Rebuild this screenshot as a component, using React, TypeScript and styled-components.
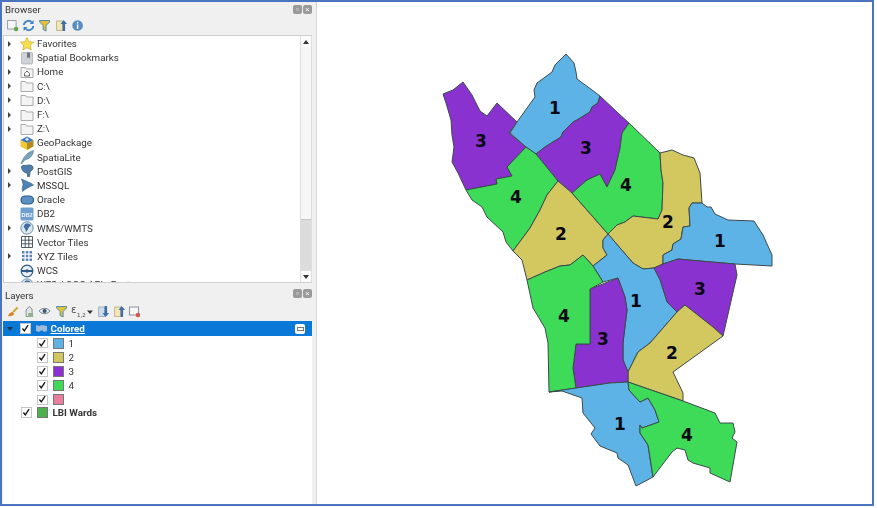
import * as React from 'react';
import styled, { createGlobalStyle } from 'styled-components';

const GlobalStyle = createGlobalStyle`
    html, body {
        margin: 0;
        background: #fff;
    }
`;

const Frame = styled.div`
    box-sizing: border-box;
    width: 874px;
    height: 506px;
    border: 2px solid #4a74bd;
    display: flex;
    font-family: Roboto, "Liberation Sans", sans-serif;
    font-size: 9.8px;
    color: #333;
`;

const Sidebar = styled.div`
    box-sizing: border-box;
    width: 315px;
    padding-left: 1px;
    background: #f0f0f0;
    border-right: 1px solid #d4d4d4;
    display: flex;
    flex-direction: column;
    filter: blur(0.3px);
`;

const DockHeader = styled.div<{ $height: number }>`
    height: ${props => props.$height}px;
    padding-right: 4px;
    display: flex;
    align-items: center;
    justify-content: space-between;
`;

const DockTitle = styled.span<{ $offset?: number }>`
    padding-left: 2px;
    margin-top: ${props => props.$offset || 0}px;
    font-size: 9.8px;
`;

const DockButtons = styled.div`
    display: flex;
    gap: 1px;
`;

const DockButton = styled.div`
    width: 9px;
    height: 9px;
    border-radius: 2px;
    background: #9a9a9a;
    color: #f2f2f2;
    font-size: 8px;
    line-height: 9px;
    text-align: center;
`;

const Toolbar = styled.div<{ $height: number; $bottom?: number }>`
    box-sizing: border-box;
    height: ${props => props.$height}px;
    padding-left: 2px;
    padding-bottom: ${props => props.$bottom || 0}px;
    display: flex;
    align-items: center;
`;

const ToolIcon = styled.svg<{ $width?: number }>`
    width: ${props => props.$width || 16.2}px;
    height: 13px;
    flex: none;
`;

const BrowserTree = styled.div`
    box-sizing: border-box;
    width: 309px;
    height: 248px;
    flex: none;
    background: #fff;
    border: 1px solid #d0d0d0;
    border-right: none;
    display: flex;
    overflow: hidden;
`;

const TreeRows = styled.div`
    flex: 1;
    padding-top: 0.5px;
    overflow: hidden;
`;

const Row = styled.div`
    height: 14.2px;
    display: flex;
    align-items: center;
    white-space: nowrap;
`;

const ArrowSlot = styled.div`
    box-sizing: border-box;
    width: 15px;
    flex: none;
    display: flex;
    padding-left: 4px;
`;

const RowArrow = styled.div`
    width: 0;
    height: 0;
    border-top: 3px solid transparent;
    border-bottom: 3px solid transparent;
    border-left: 3.5px solid #444;
`;

const RowIcon = styled.svg`
    width: 14px;
    height: 14px;
    margin-left: 1px;
    margin-right: 3px;
    flex: none;
`;

const Scrollbar = styled.div`
    width: 12px;
    flex: none;
    background: #f6f6f6;
    border-left: 1px solid #dedede;
    border-right: 1px solid #dedede;
    box-sizing: border-box;
    display: flex;
    flex-direction: column;
    justify-content: space-between;
`;

const ScrollButton = styled.div`
    height: 11px;
    background: #fbfbfb;
    display: flex;
    align-items: center;
    justify-content: center;
`;

const ScrollArrow = styled.div<{ $up?: boolean }>`
    width: 0;
    height: 0;
    border-left: 3.5px solid transparent;
    border-right: 3.5px solid transparent;
    ${props => props.$up ? 'border-bottom: 4px solid #333;' : 'border-top: 4px solid #333;'}
`;

const ScrollThumb = styled.div`
    height: 52px;
    margin-top: auto;
    background: #dcdcdc;
    border-top: 1px solid #c8c8c8;
    box-sizing: border-box;
`;

const LayerTree = styled.div`
    flex: 1;
    width: 309px;
    background: #fff;
`;

const LayerRow = styled.div<{ $selected?: boolean; $indent: number }>`
    height: 14.2px;
    padding-left: ${props => props.$indent}px;
    display: flex;
    align-items: center;
    background: ${props => props.$selected ? '#0a78d7' : 'transparent'};
    color: ${props => props.$selected ? '#fff' : '#333'};
`;

const SelectedRow = styled(LayerRow)`
    height: 15px;
`;

const RootLayerRow = styled(LayerRow)`
    margin-top: -1.5px;
`;

const LayerArrow = styled.div`
    width: 0;
    height: 0;
    margin: 0 7px 0 4px;
    border-left: 3.5px solid transparent;
    border-right: 3.5px solid transparent;
    border-top: 4px solid #20364e;
`;

const Checkbox = styled.div`
    box-sizing: border-box;
    width: 10.5px;
    height: 10.5px;
    flex: none;
    background: #fff;
    border: 1px solid #c6c6c6;
    display: flex;
    align-items: center;
    justify-content: center;
`;

const Swatch = styled.div<{ $color: string }>`
    box-sizing: border-box;
    width: 11px;
    height: 11px;
    flex: none;
    margin-left: 5px;
    margin-right: 5px;
    background: ${props => props.$color};
    border: 1px solid #777;
`;

const LayerName = styled.span<{ $bold?: boolean; $underline?: boolean }>`
    font-weight: ${props => props.$bold ? 700 : 400};
    text-decoration: ${props => props.$underline ? 'underline' : 'none'};
`;

const LayerIcon = styled.svg`
    width: 13px;
    height: 11px;
    flex: none;
    margin-left: 4px;
    margin-right: 3px;
`;

const IndicatorBox = styled.div`
    margin-left: auto;
    margin-right: 7px;
    width: 10px;
    height: 10px;
    border-radius: 2px;
    background: #fff;
    display: flex;
    align-items: center;
    justify-content: center;
`;

const IndicatorBar = styled.div`
    width: 7px;
    height: 4px;
    border: 1px solid #777;
    box-sizing: border-box;
`;

const MapPane = styled.div`
    flex: 1;
    background: #fff;
    min-width: 0;
`;

const MapSvg = styled.svg`
    display: block;
    width: 100%;
    height: 100%;
`;

const Ward = styled.polygon`
    stroke: #3b4a4c;
    stroke-width: 1;
    stroke-linejoin: round;
`;

const WardLabel = styled.text`
    font-family: "DejaVu Sans", sans-serif;
    font-weight: 700;
    font-size: 17px;
    fill: #0a0a14;
    text-anchor: middle;
    dominant-baseline: central;
`;

const BLUE = '#5eb3e6';
const YELLOW = '#d3c860';
const PURPLE = '#8a32d0';
const GREEN = '#3ddb58';

const wards: { color: string; points: string }[] = [
    { color: PURPLE, points: '443,94 453,90 463,82 472,95 480,111 487,116 497,103 517,122 509,133 526,147 507,167 512,176 496,179 497,184 466,190 458,173 452,162 454,147 452,135 451,120 446,103' },
    { color: BLUE, points: '510,133 517,122 535,97 534,90 537,83 552,72 555,65 566,54 574,63 576,72 577,79 588,87 600,96 598,103 592,107 590,112 577,120 573,122 563,132 561,137 545,147 536,154 526,147' },
    { color: PURPLE, points: '536,154 545,147 561,137 563,132 573,122 577,120 590,112 592,107 598,103 600,96 617,112 629,123 622,133 620,148 615,170 607,187 600,174 587,180 572,193 558,181' },
    { color: GREEN, points: '526,147 507,167 512,176 496,179 497,184 466,190 472,200 482,207 487,217 503,232 506,242 513,251 530,228 540,210 547,195 558,181 536,154' },
    { color: YELLOW, points: '558,181 572,193 608,234 603,240 603,248 607,255 593,266 583,255 570,265 560,266 545,272 527,280 522,260 513,251 530,228 540,210 547,195' },
    { color: GREEN, points: '572,193 587,180 600,174 607,187 615,170 620,148 622,133 629,123 660,153 661,170 663,183 662,210 658,219 633,216 625,222 617,225 608,234' },
    { color: YELLOW, points: '660,153 672,150 683,155 694,158 700,173 702,203 692,203 689,208 690,226 683,227 681,239 673,244 672,250 663,255 663,264 654,268 643,269 633,263 620,248 608,234 617,225 625,222 633,216 658,219 662,210 663,183 661,170' },
    { color: BLUE, points: '702,203 707,207 711,207 715,214 728,220 754,221 763,235 772,255 772,266 735,264 700,261 678,259 663,264 663,255 672,250 673,244 681,239 683,227 690,226 689,208 692,203' },
    { color: PURPLE, points: '654,268 663,264 678,259 700,261 735,264 737,275 723,336 713,327 685,305 677,312 667,302 660,280' },
    { color: BLUE, points: '608,234 620,248 633,263 643,269 654,268 660,280 667,302 677,312 650,343 638,352 628,372 623,360 623,343 627,310 625,297 618,278 603,282 593,266 607,255 603,248 603,240' },
    { color: YELLOW, points: '685,305 713,327 723,336 673,372 683,393 683,401 628,382 628,372 638,352 650,343 677,312' },
    { color: PURPLE, points: '618,278 625,297 627,310 623,343 623,360 628,372 628,382 610,383 576,388 573,368 576,344 590,344 590,289' },
    { color: GREEN, points: '583,255 593,266 603,282 590,289 590,344 576,344 573,368 576,388 549,392 548,343 545,328 533,308 527,280 545,272 560,266 570,265' },
    { color: BLUE, points: '549,392 576,388 610,383 628,382 629,390 640,402 648,398 655,410 659,422 642,428 640,425 640,433 648,445 653,477 636,486 628,465 618,458 617,453 600,446 591,434 595,428 583,413 582,398 562,391' },
    { color: GREEN, points: '628,382 683,401 715,413 720,423 733,423 735,432 732,438 737,442 730,482 710,473 710,468 693,463 688,460 685,450 677,448 672,452 653,477 648,445 640,433 640,425 642,428 659,422 655,410 648,398 640,402 629,390' },
];

const wardLabels: { text: string; x: number; y: number }[] = [
    { text: '1', x: 555, y: 108 },
    { text: '3', x: 481, y: 141 },
    { text: '3', x: 586, y: 148 },
    { text: '4', x: 516, y: 197 },
    { text: '4', x: 626, y: 185 },
    { text: '2', x: 561, y: 234 },
    { text: '2', x: 668, y: 222 },
    { text: '1', x: 720, y: 241 },
    { text: '1', x: 636, y: 301 },
    { text: '3', x: 700, y: 289 },
    { text: '4', x: 564, y: 316 },
    { text: '3', x: 603, y: 339 },
    { text: '2', x: 672, y: 353 },
    { text: '1', x: 620, y: 424 },
    { text: '4', x: 687, y: 435 },
];

const folder = <path d="M1 2.500h4.500l1 1.500H13v8.500H1z" fill="#f4f4f4" stroke="#a2a2a2" strokeWidth="0.9" />;

const treeIcons: Record<string, React.ReactNode> = {
    star: <path d="M7 .4l2 4.300 4.700.5-3.500 3.100 1 4.700-4.200-2.400-4.200 2.400 1-4.700L.3 5.200 5 4.700z" fill="#f7e04b" stroke="#c9a82c" strokeWidth="0.7" />,
    bookmark: (
        <>
            <rect x="1.500" y="1.500" width="11" height="11.500" rx="1" fill="#cfd2d6" stroke="#a5a8ac" strokeWidth="0.7" />
            <path d="M7 1.500h3v6L8.500 6.300 7 7.500z" fill="#73767a" />
        </>
    ),
    home: (
        <>
            {folder}
            <path d="M4.500 8.500L7 6l2.500 2.500v2.500h-5z" fill="#fff" stroke="#555" strokeWidth="0.9" />
        </>
    ),
    folder,
    geopackage: (
        <>
            <path d="M7 7l6.500-3v6.500L7 14z" fill="#b78a1c" />
            <path d="M7 7L.5 4v6.500L7 14z" fill="#f0c935" />
            <path d="M7 .5L13.500 4 7 7 .5 4z" fill="#3f78b5" />
            <path d="M5 3.500L7 1.500l2 2-2 1.500z" fill="#dfe8ef" />
        </>
    ),
    spatialite: <path d="M1 13.500C3 8 6.500 2.500 13.500.5c-.5 4.500-3 8-7.500 9C4 10.500 3 11.500 2 13.700z" fill="#7da4bd" stroke="#4d7690" strokeWidth="0.6" />,
    postgis: <path d="M1.500 3c0-1.500 2-2 4.500-1.500 2-1 6.500-.8 7 1.500.4 2-1.500 4-3 5l-.5 4.500H7.500V9C5 9.500 1.500 6.500 1.500 3z" fill="#4f7ca8" stroke="#2f5578" strokeWidth="0.7" />,
    mssql: <path d="M1.500 1c3 1.500 9 3.500 12 6-3 1.500-8 3.500-11 6.500-.8-3.500.5-5.500.5-7S2 3 1.500 1z" fill="#4f81b5" stroke="#2f5b8a" strokeWidth="0.6" />,
    oracle: <rect x="1" y="3" width="12.500" height="8" rx="3.900" fill="#5c8fc4" stroke="#2f5f93" strokeWidth="1.200" />,
    db2: (
        <>
            <rect x="0.500" y="0.500" width="13" height="13" rx="1.500" fill="#6e9fd0" />
            <text x="7" y="9.500" fontSize="5.500" fontWeight="700" fill="#f0f6fb" textAnchor="middle" fontFamily="Liberation Sans">DB2</text>
        </>
    ),
    globe: (
        <>
            <circle cx="7" cy="7" r="6.200" fill="#dbe6f0" stroke="#6d8fb0" strokeWidth="1" />
            <path d="M5 3c2-1 5-.5 6 1.500L9 6 7.500 9 6 11 5 7.500 3.500 6z" fill="#3f6f9e" />
        </>
    ),
    grid: <path d="M1.500 1.500h11v11h-11zM5.200 1.500v11M8.800 1.500v11M1.500 5.200h11M1.500 8.800h11" fill="#fff" stroke="#3d4a55" strokeWidth="0.9" />,
    dots: <path d="M2 2h2.500v2.500H2zM5.800 2h2.500v2.500H5.800zM9.500 2H12v2.500H9.500zM2 5.800h2.500v2.500H2zM5.800 5.800h2.500v2.500H5.800zM9.500 5.800H12v2.500H9.500zM2 9.500h2.500V12H2zM5.800 9.500h2.500V12H5.800zM9.500 9.500H12V12H9.500z" fill="#5b84b5" />,
    wcs: (
        <>
            <circle cx="7" cy="7" r="5.800" fill="#e9eff5" stroke="#2f5b8a" strokeWidth="1.300" />
            <path d="M1.500 7h11" stroke="#2f5b8a" strokeWidth="2" />
            <circle cx="7" cy="7" r="1.800" fill="#2f5b8a" />
        </>
    ),
};

const browserItems: { label: string; icon: string; expandable: boolean }[] = [
    { label: 'Favorites', icon: 'star', expandable: true },
    { label: 'Spatial Bookmarks', icon: 'bookmark', expandable: true },
    { label: 'Home', icon: 'home', expandable: true },
    { label: 'C:\\', icon: 'folder', expandable: true },
    { label: 'D:\\', icon: 'folder', expandable: true },
    { label: 'F:\\', icon: 'folder', expandable: true },
    { label: 'Z:\\', icon: 'folder', expandable: true },
    { label: 'GeoPackage', icon: 'geopackage', expandable: false },
    { label: 'SpatiaLite', icon: 'spatialite', expandable: false },
    { label: 'PostGIS', icon: 'postgis', expandable: true },
    { label: 'MSSQL', icon: 'mssql', expandable: true },
    { label: 'Oracle', icon: 'oracle', expandable: false },
    { label: 'DB2', icon: 'db2', expandable: false },
    { label: 'WMS/WMTS', icon: 'globe', expandable: true },
    { label: 'Vector Tiles', icon: 'grid', expandable: false },
    { label: 'XYZ Tiles', icon: 'dots', expandable: true },
    { label: 'WCS', icon: 'wcs', expandable: false },
    { label: 'WFS / OGC API - Features', icon: 'globe', expandable: true },
];

const funnel = <path d="M1.500 1.500h10v1.500L8 6.500V12l-3-1.500v-4L1.500 3z" fill="#e3c23a" stroke="#3d87b8" strokeWidth="0.9" />;
const upDoc = (
    <>
        <path d="M1.500 2h6v9.500h-6z" fill="#f3e7b8" stroke="#b9a873" strokeWidth="0.8" />
        <path d="M8.500 1L12 5H10v7H7.500V5H5.500z" fill="#3f6fa8" />
    </>
);

const browserTools: React.ReactNode[] = [
    <>
        <rect x="1.500" y="1.500" width="8.500" height="8.500" fill="#f6f6f6" stroke="#8c9aa5" strokeWidth="0.9" />
        <circle cx="10" cy="10" r="2.300" fill="#67a54a" />
    </>,
    <>
        <path d="M1.800 6a4.500 4.500 0 0 1 8-2.500M11.200 7a4.500 4.500 0 0 1-8 2.500" fill="none" stroke="#3f86c4" strokeWidth="1.800" />
        <path d="M11.500 1v4h-4zM1.500 12V8h4z" fill="#3f86c4" />
    </>,
    funnel,
    upDoc,
    <>
        <circle cx="6.500" cy="6.500" r="5.300" fill="#5a8fc2" />
        <path d="M5.800 5.500h1.400V10H5.800zM5.800 3h1.400v1.400H5.800z" fill="#fff" />
    </>,
];

const layerTools: { node: React.ReactNode; width?: number }[] = [
    { node: <><path d="M2 11c1-3 3-4 4.500-4l1.500 1.500C8 10 5 12 2 11z" fill="#d9822b" /><path d="M7 7l4.500-4.500" stroke="#c9a82c" strokeWidth="1.800" /></> },
    { node: <><path d="M4 11.500V5l3-3.500L10 4v7.500z" fill="#e4e6e6" stroke="#79848a" strokeWidth="0.9" /><path d="M6 8h5v4H6z" fill="#8fb28f" /></> },
    { node: <><path d="M1 6c3-3.500 8-3.500 11 0-3 3.500-8 3.500-11 0z" fill="#e8edf0" stroke="#66757f" strokeWidth="0.9" /><circle cx="6.500" cy="6" r="2" fill="#33556f" /></> },
    { node: funnel },
    { node: <><text x="1" y="8" fontSize="10" fill="#444" fontFamily="DejaVu Sans">ε</text><text x="7" y="11.500" fontSize="5.500" fill="#444" fontFamily="DejaVu Sans">1,2</text><path d="M17 5.500h6l-3 3.500z" fill="#333" /></>, width: 26 },
    { node: <><path d="M1.500 2h6v9.500h-6z" fill="#cfdce8" stroke="#8ea3b5" strokeWidth="0.8" /><path d="M8.500 12L12 8H10V1H7.500v7H5.500z" fill="#3f6fa8" /></> },
    { node: upDoc },
    { node: <><rect x="1.500" y="2" width="9" height="8" fill="#f7f7f7" stroke="#7d8a94" strokeWidth="0.9" /><circle cx="10" cy="10" r="2.300" fill="#d9534f" /></>, width: 12 },
];

const classes: { label: string; color: string }[] = [
    { label: '1', color: '#5eb3e4' },
    { label: '2', color: '#d2c75c' },
    { label: '3', color: '#8a30d0' },
    { label: '4', color: '#3ed957' },
    { label: '', color: '#e87d9e' },
];

const Check = () => (
    <svg width="9" height="9" viewBox="0 0 9 9">
        <path d="M1.500 4.500l2 2.500 4-6" fill="none" stroke="#111" strokeWidth="1.400" />
    </svg>
);

const DockControls = () => (
    <DockButtons>
        <DockButton>▫</DockButton>
        <DockButton>×</DockButton>
    </DockButtons>
);

const App = () => (
    <>
        <GlobalStyle />
        <Frame>
            <Sidebar>
                <DockHeader $height={14}>
                    <DockTitle>Browser</DockTitle>
                    <DockControls />
                </DockHeader>
                <Toolbar $height={19}>
                    {browserTools.map((tool, i) => (
                        <ToolIcon key={i} viewBox="0 0 14 13">{tool}</ToolIcon>
                    ))}
                </Toolbar>
                <BrowserTree>
                    <TreeRows>
                        {browserItems.map(item => (
                            <Row key={item.label}>
                                <ArrowSlot>{item.expandable && <RowArrow />}</ArrowSlot>
                                <RowIcon viewBox="0 0 14 14">{treeIcons[item.icon]}</RowIcon>
                                {item.label}
                            </Row>
                        ))}
                    </TreeRows>
                    <Scrollbar>
                        <ScrollButton><ScrollArrow $up /></ScrollButton>
                        <ScrollThumb />
                        <ScrollButton><ScrollArrow /></ScrollButton>
                    </Scrollbar>
                </BrowserTree>
                <DockHeader $height={21}>
                    <DockTitle $offset={4}>Layers</DockTitle>
                    <DockControls />
                </DockHeader>
                <Toolbar $height={17} $bottom={3}>
                    {layerTools.map((tool, i) => (
                        <ToolIcon key={i} $width={tool.width} viewBox={`0 0 ${tool.width || 14} 13`}>{tool.node}</ToolIcon>
                    ))}
                </Toolbar>
                <LayerTree>
                    <SelectedRow $selected $indent={0}>
                        <LayerArrow />
                        <Checkbox><Check /></Checkbox>
                        <LayerIcon viewBox="0 0 13 11">
                            <path d="M1 2l3 1 3-1 5 1v5l-3 1-2-2-3 2-3-1z" fill="#9dbbd8" />
                        </LayerIcon>
                        <LayerName $bold $underline>Colored</LayerName>
                        <IndicatorBox><IndicatorBar /></IndicatorBox>
                    </SelectedRow>
                    {classes.map(item => (
                        <LayerRow key={item.color} $indent={34}>
                            <Checkbox><Check /></Checkbox>
                            <Swatch $color={item.color} />
                            <LayerName>{item.label}</LayerName>
                        </LayerRow>
                    ))}
                    <RootLayerRow $indent={18}>
                        <Checkbox><Check /></Checkbox>
                        <Swatch $color="#4cb04c" />
                        <LayerName $bold>LBI Wards</LayerName>
                    </RootLayerRow>
                </LayerTree>
            </Sidebar>
            <MapPane>
                <MapSvg viewBox="317 2 555 502" preserveAspectRatio="xMinYMin meet">
                    {wards.map(ward => (
                        <Ward key={ward.points} points={ward.points} fill={ward.color} />
                    ))}
                    {wardLabels.map(label => (
                        <WardLabel key={`${label.x}-${label.y}`} x={label.x} y={label.y}>{label.text}</WardLabel>
                    ))}
                </MapSvg>
            </MapPane>
        </Frame>
    </>
);

export default App;
